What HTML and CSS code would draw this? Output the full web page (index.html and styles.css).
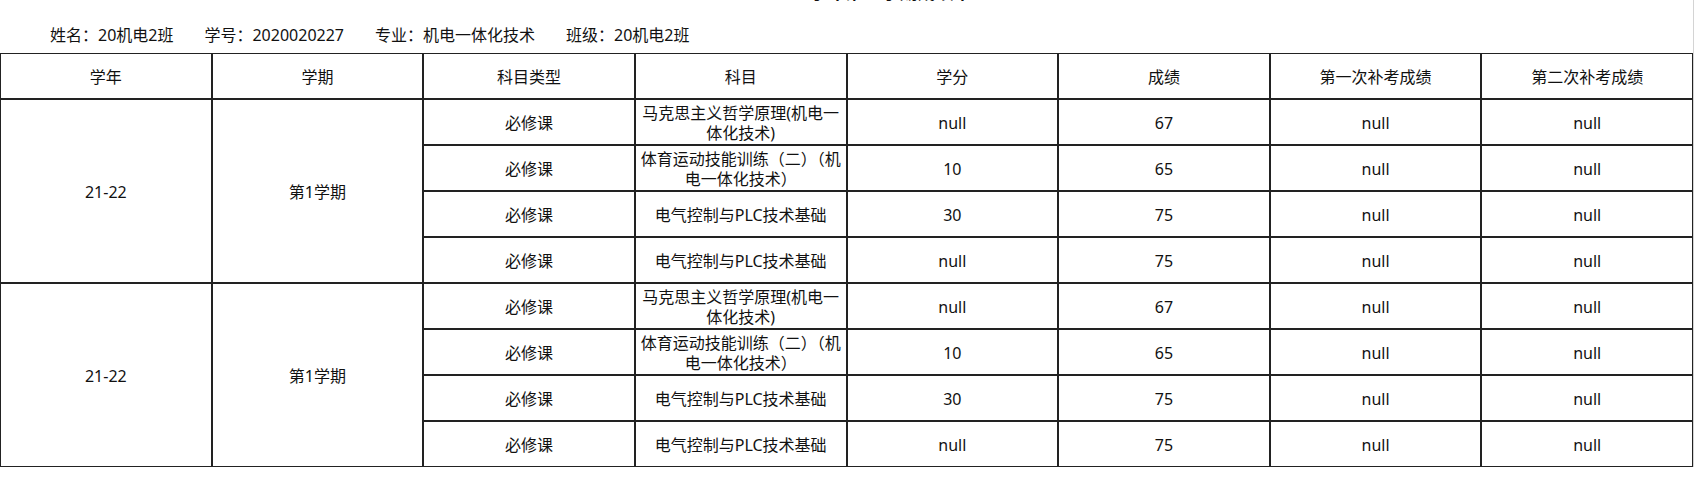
FILE: index.html
```html
<!DOCTYPE html>
<html lang="zh-CN">
<head>
<meta charset="utf-8">
<title>成绩单</title>
<link rel="stylesheet" href="styles.css">
</head>
<body>
<div class="page">
  <div class="title">2021-2022学年第一学期成绩单</div>
  <div class="info">
    <span>姓名：20机电2班</span>
    <span>学号：2020020227</span>
    <span>专业：机电一体化技术</span>
    <span>班级：20机电2班</span>
  </div>
  <table class="grades">
    <thead>
      <tr>
        <th>学年</th><th>学期</th><th>科目类型</th><th>科目</th><th>学分</th><th>成绩</th><th>第一次补考成绩</th><th>第二次补考成绩</th>
      </tr>
    </thead>
    <tbody>
      <tr>
        <td rowspan="4">21-22</td><td rowspan="4">第1学期</td>
        <td>必修课</td><td>马克思主义哲学原理(机电一体化技术)</td><td>null</td><td>67</td><td>null</td><td>null</td>
      </tr>
      <tr>
        <td>必修课</td><td>体育运动技能训练（二）（机电一体化技术）</td><td>10</td><td>65</td><td>null</td><td>null</td>
      </tr>
      <tr>
        <td>必修课</td><td>电气控制与PLC技术基础</td><td>30</td><td>75</td><td>null</td><td>null</td>
      </tr>
      <tr>
        <td>必修课</td><td>电气控制与PLC技术基础</td><td>null</td><td>75</td><td>null</td><td>null</td>
      </tr>
      <tr>
        <td rowspan="4">21-22</td><td rowspan="4">第1学期</td>
        <td>必修课</td><td>马克思主义哲学原理(机电一体化技术)</td><td>null</td><td>67</td><td>null</td><td>null</td>
      </tr>
      <tr>
        <td>必修课</td><td>体育运动技能训练（二）（机电一体化技术）</td><td>10</td><td>65</td><td>null</td><td>null</td>
      </tr>
      <tr>
        <td>必修课</td><td>电气控制与PLC技术基础</td><td>30</td><td>75</td><td>null</td><td>null</td>
      </tr>
      <tr>
        <td>必修课</td><td>电气控制与PLC技术基础</td><td>null</td><td>75</td><td>null</td><td>null</td>
      </tr>
    </tbody>
  </table>
</div>
</body>
</html>
```

FILE: styles.css
```css
html, body {
  margin: 0;
  padding: 0;
  background: #fff;
}

body {
  font-family: "Noto Sans", "Noto Sans CJK SC", sans-serif;
  color: #111;
  overflow: hidden;
}

.page {
  width: 1693px;
  min-height: 478px;
  border-right: 1px solid #d4d4d4;
}

.title {
  margin-top: -20px;
  height: 24px;
  line-height: 24px;
  font-size: 18px;
  font-weight: bold;
  text-align: center;
}

.info {
  display: flex;
  gap: 31px;
  margin-top: 19px;
  padding-left: 50px;
  font-size: 16px;
  line-height: 24px;
}

.grades {
  margin-top: 6px;
  width: 1693px;
  table-layout: fixed;
  border-collapse: separate;
  border-spacing: 0;
  font-size: 16px;
}

.grades th,
.grades td {
  border: 1px solid #222;
  padding: 2px 0 0;
  height: 42px;
  line-height: 20px;
  text-align: center;
  vertical-align: middle;
  font-weight: normal;
}
```
